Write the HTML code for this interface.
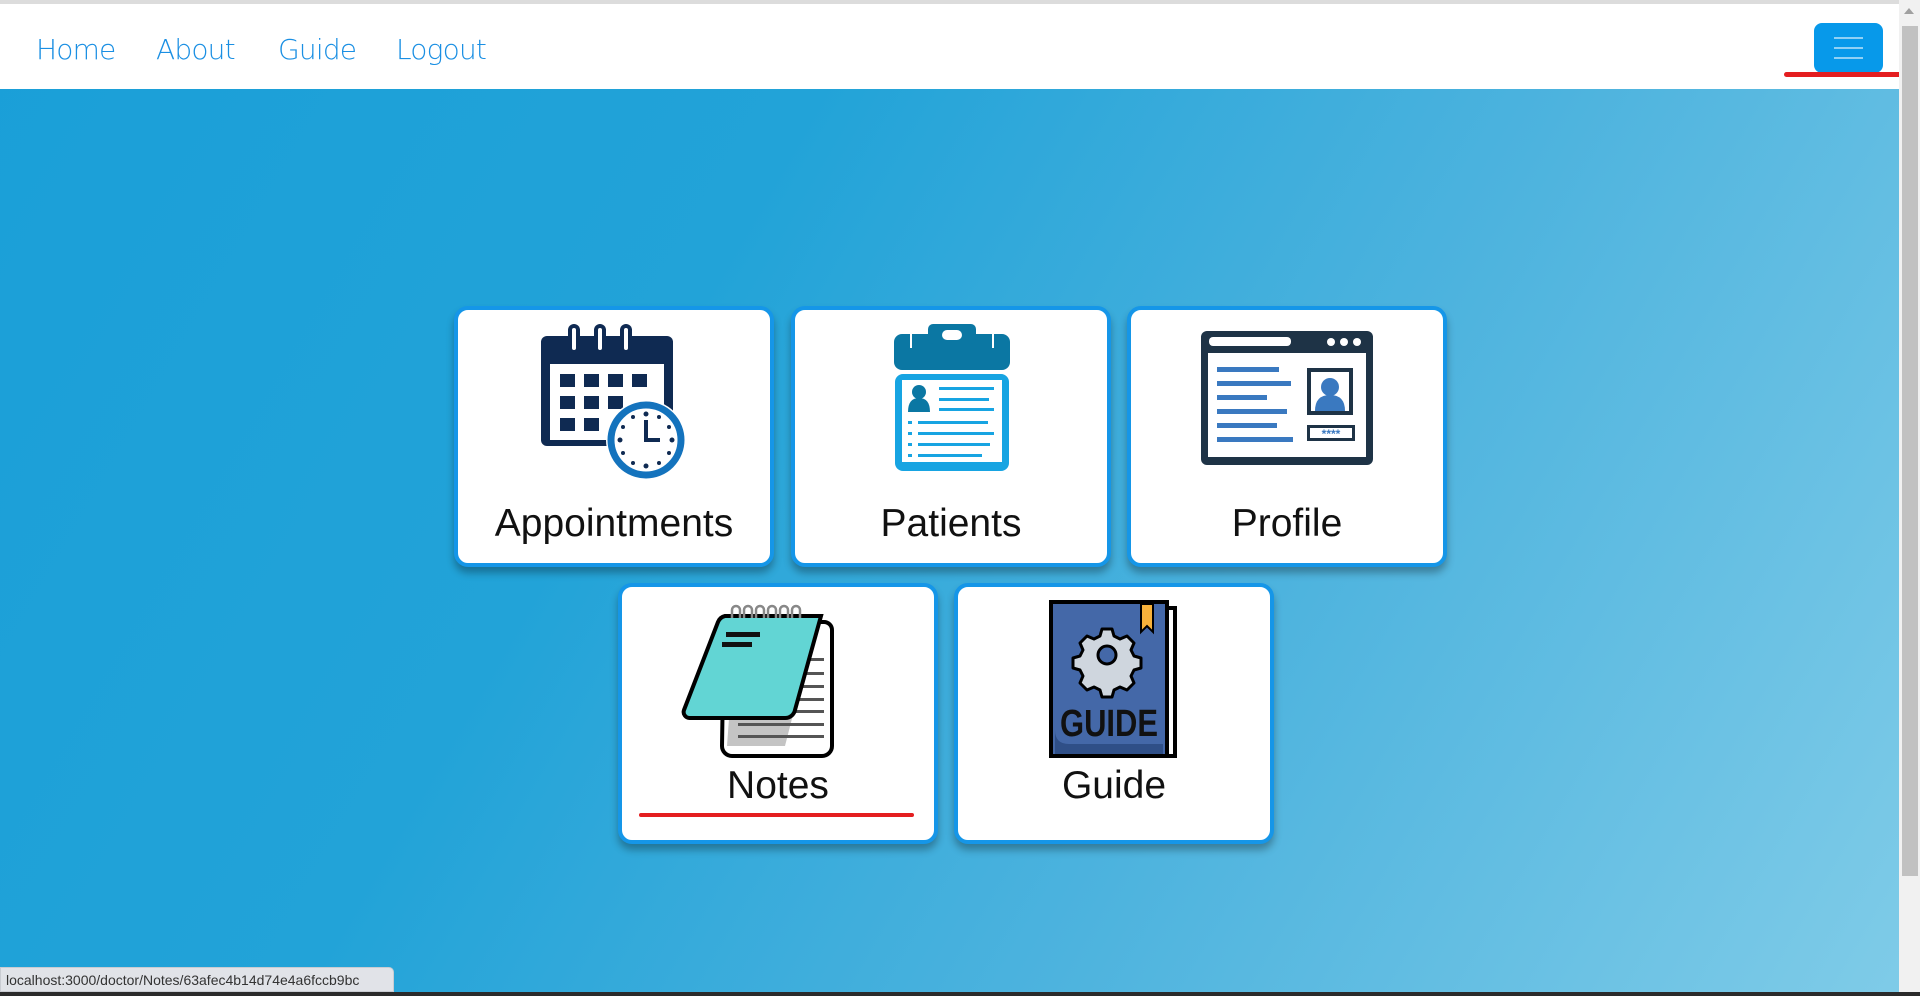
<!DOCTYPE html>
<html><head><meta charset="utf-8"><style>
*{margin:0;padding:0;box-sizing:border-box}
html,body{width:1920px;height:996px;overflow:hidden}
body{position:relative;font-family:"Liberation Sans",Arial,sans-serif;background:linear-gradient(120deg,#1a9fd8 0%,#22a3d8 35%,#4db3de 65%,#80cce8 100%)}
.topline{position:absolute;left:0;top:0;width:1899px;height:4px;background:#dcdcdc}
.nav{position:absolute;left:0;top:4px;width:1899px;height:85px;background:#fff}
.nav a{position:absolute;top:29px;font-size:28px;color:#1a8fe3;text-decoration:none;font-family:"DejaVu Sans","Liberation Sans",sans-serif;font-weight:300;letter-spacing:-0.8px}
.tog{position:absolute;left:1814px;top:23px;width:69px;height:50px;background:#0799ea;border-radius:8px}
.tog i{position:absolute;left:20px;width:29px;height:2px;background:#8fd0f5}
.red{position:absolute;background:#e41e20;border-radius:3px}
.sb{position:absolute;left:1899px;top:0;width:21px;height:992px;background:#f1f1f1}
.thumb{position:absolute;left:1902px;top:26px;width:16px;height:850px;background:#c1c1c1}
.card{position:absolute;width:320px;height:261px;background:#fff;border:4px solid #1596e8;border-radius:14px;box-shadow:0 6px 8px rgba(0,0,0,.3)}
.card .lbl{position:absolute;left:0;right:0;text-align:center;font-size:39px;color:#111}
.card svg{position:absolute}
.status{position:absolute;left:0;top:967px;width:394px;height:25px;background:#e1e3e8;border:1px solid #c9ccd2;border-top-right-radius:5px;font-size:14px;color:#333;padding:4px 0 0 5px}
.bottom{position:absolute;left:0;top:992px;width:1920px;height:4px;background:#2b2b2b}
</style></head><body>
<div class="topline"></div>
<div class="nav">
<a style="left:36px">Home</a><a style="left:156px">About</a><a style="left:278px">Guide</a><a style="left:396px">Logout</a>
</div>
<div class="tog"><i style="top:14px"></i><i style="top:24px"></i><i style="top:34px"></i></div>
<div class="red" style="left:1784px;top:72px;width:122px;height:5px"></div>
<div class="sb"></div><div class="thumb"></div>
<div style="position:absolute;left:1904px;top:8px;border:5px solid transparent;border-bottom:6px solid #a0a0a0;border-top:0"></div>

<!-- Appointments -->
<div class="card" style="left:454px;top:306px">
<svg style="left:83px;top:14px" width="146" height="156" viewBox="0 0 146 156">
<rect x="0" y="12" width="132" height="110" rx="6" fill="#0f2a52"/>
<rect x="9" y="40" width="114" height="76" fill="#fff"/>
<g fill="none" stroke-linecap="round"><g stroke="#0f2a52" stroke-width="12"><path d="M33 6v18"/><path d="M59 6v18"/><path d="M85 6v18"/></g><g stroke="#fff" stroke-width="4"><path d="M33 6v18"/><path d="M59 6v18"/><path d="M85 6v18"/></g></g>
<g fill="#0f2a52"><rect x="19" y="50" width="15" height="13"/><rect x="43" y="50" width="15" height="13"/><rect x="67" y="50" width="15" height="13"/><rect x="91" y="50" width="15" height="13"/><rect x="19" y="72" width="15" height="13"/><rect x="43" y="72" width="15" height="13"/><rect x="67" y="72" width="15" height="13"/><rect x="19" y="94" width="15" height="13"/><rect x="43" y="94" width="15" height="13"/></g>
<circle cx="105" cy="116" r="40" fill="#fff"/><circle cx="105" cy="116" r="35" fill="#fff" stroke="#1473bd" stroke-width="7"/>
<g fill="#0f2a52"><circle cx="105" cy="90" r="2.5"/><circle cx="105" cy="142" r="2.5"/><circle cx="79" cy="116" r="2.5"/><circle cx="131" cy="116" r="2.5"/><circle cx="118" cy="93" r="2"/><circle cx="128" cy="103" r="2"/><circle cx="128" cy="129" r="2"/><circle cx="118" cy="139" r="2"/><circle cx="92" cy="139" r="2"/><circle cx="82" cy="129" r="2"/><circle cx="82" cy="103" r="2"/><circle cx="92" cy="93" r="2"/></g>
<path d="M105 96v20h14" stroke="#0f2a52" stroke-width="4" fill="none"/>
</svg>
<div class="lbl" style="top:192px">Appointments</div>
</div>

<!-- Patients -->
<div class="card" style="left:791px;top:306px">
<svg style="left:99px;top:14px" width="116" height="148" viewBox="0 0 116 148">
<rect x="0" y="10" width="116" height="36" rx="8" fill="#0b77a3"/>
<rect x="34" y="0" width="48" height="20" rx="5" fill="#0b77a3"/>
<rect x="48" y="6" width="20" height="10" rx="5" fill="#fff"/>
<rect x="16" y="10" width="2" height="14" fill="#fff"/><rect x="98" y="10" width="2" height="14" fill="#fff"/>
<rect x="1" y="50" width="114" height="97" rx="8" fill="#17a4e2"/>
<rect x="8" y="56" width="100" height="82" fill="#fff"/>
<circle cx="25" cy="68" r="7" fill="#0b77a3"/><path d="M14 88q0-14 11-14t11 14z" fill="#0b77a3"/>
<g fill="#17a4e2"><rect x="45" y="63" width="55" height="3"/><rect x="45" y="74" width="50" height="3"/><rect x="45" y="84" width="55" height="3"/>
<rect x="14" y="97" width="4" height="3"/><rect x="24" y="97" width="70" height="3"/><rect x="14" y="108" width="4" height="3"/><rect x="24" y="108" width="76" height="3"/><rect x="14" y="119" width="4" height="3"/><rect x="24" y="119" width="72" height="3"/><rect x="14" y="130" width="4" height="3"/><rect x="24" y="130" width="64" height="3"/></g>
</svg>
<div class="lbl" style="top:192px">Patients</div>
</div>

<!-- Profile -->
<div class="card" style="left:1127px;top:306px">
<svg style="left:70px;top:21px" width="172" height="134" viewBox="0 0 172 134">
<rect x="0" y="0" width="172" height="134" rx="6" fill="#1e3346"/>
<rect x="7" y="22" width="158" height="104" fill="#fff"/>
<rect x="8" y="6" width="82" height="9" rx="4" fill="#fff"/>
<circle cx="130" cy="11" r="4" fill="#fff"/><circle cx="143" cy="11" r="4" fill="#fff"/><circle cx="156" cy="11" r="4" fill="#fff"/>
<g fill="#3a79c0"><rect x="16" y="36" width="62" height="5"/><rect x="16" y="50" width="74" height="5"/><rect x="16" y="64" width="50" height="5"/><rect x="16" y="78" width="70" height="5"/><rect x="16" y="92" width="60" height="5"/><rect x="16" y="106" width="76" height="5"/></g>
<rect x="106" y="37" width="46" height="47" fill="#1e3346"/><rect x="110" y="41" width="38" height="39" fill="#fff"/>
<circle cx="129" cy="56" r="9" fill="#3a79c0"/><path d="M114 80q0-16 15-16t15 16z" fill="#3a79c0"/>
<rect x="106" y="94" width="48" height="16" fill="#1e3346"/><rect x="109" y="97" width="42" height="10" fill="#fff"/>
<text x="130" y="107" font-size="12" font-weight="bold" text-anchor="middle" fill="#3a79c0" font-family="Liberation Sans">****</text>
</svg>
<div class="lbl" style="top:192px">Profile</div>
</div>

<!-- Notes -->
<div class="card" style="left:618px;top:583px">
<svg style="left:58px;top:15px" width="156" height="156" viewBox="0 0 156 156">
<path d="M44 20h100a8 8 0 0 1 8 8v116a10 10 0 0 1-10 10H52a10 10 0 0 1-10-10z" fill="#fff" stroke="#000" stroke-width="4"/>
<path d="M55 34l78 0 -28 110h-58z" fill="#c4c4c4"/>
<g fill="#555"><rect x="98" y="56" width="46" height="3"/><rect x="94" y="70" width="50" height="3"/><rect x="90" y="83" width="54" height="3"/><rect x="60" y="96" width="84" height="3"/><rect x="60" y="108" width="84" height="3"/><rect x="58" y="121" width="86" height="3"/><rect x="58" y="133" width="86" height="3"/></g>
<path d="M45 14h96l-26 94a10 10 0 0 1-10 8H10a6 6 0 0 1-6-8l34-88a10 10 0 0 1 7-6z" fill="#62d5d4" stroke="#000" stroke-width="4"/>
<rect x="46" y="30" width="34" height="5" fill="#111"/><rect x="42" y="40" width="30" height="5" fill="#111"/>
<g fill="none" stroke="#888" stroke-width="2.5"><path d="M52 16v-8a4 4 0 0 1 8 0v8"/><path d="M64 16v-8a4 4 0 0 1 8 0v8"/><path d="M76 16v-8a4 4 0 0 1 8 0v8"/><path d="M88 16v-8a4 4 0 0 1 8 0v8"/><path d="M100 16v-8a4 4 0 0 1 8 0v8"/><path d="M112 16v-8a4 4 0 0 1 8 0v8"/></g>
</svg>
<div class="lbl" style="top:177px">Notes</div>
<div class="red" style="left:17px;top:226px;width:275px;height:4px"></div>
</div>

<!-- Guide -->
<div class="card" style="left:954px;top:583px">
<svg style="left:91px;top:13px" width="130" height="158" viewBox="0 0 130 158">
<rect x="110" y="8" width="16" height="148" fill="#fff" stroke="#000" stroke-width="4"/>
<rect x="2" y="2" width="116" height="154" fill="#4468a8" stroke="#000" stroke-width="4"/>
<path d="M6 130q0 14 14 14h94v10H6z" fill="#2f4f87"/>
<path d="M92 4h12v28l-6-6-6 6z" fill="#f7b23b" stroke="#000" stroke-width="2"/>
<g transform="translate(58,55)">
<path d="M-5-26h10l2 7 6 3 7-3 7 7-3 7 3 6 7 2v10l-7 2-3 6 3 7-7 7-7-3-6 3-2 7h-10l-2-7-6-3-7 3-7-7 3-7-3-6-7-2v-10l7-2 3-6-3-7 7-7 7 3 6-3z" fill="#cfd6de" stroke="#000" stroke-width="3" stroke-linejoin="round"/>
<circle r="9" fill="#4468a8" stroke="#000" stroke-width="3"/></g>
<text x="60" y="136" font-size="38" font-weight="bold" text-anchor="middle" fill="#111" font-family="Liberation Sans Narrow,Liberation Sans" textLength="98" lengthAdjust="spacingAndGlyphs">GUIDE</text>
</svg>
<div class="lbl" style="top:177px">Guide</div>
</div>

<div class="status">localhost:3000/doctor/Notes/63afec4b14d74e4a6fccb9bc</div>
<div class="bottom"></div>
</body></html>
